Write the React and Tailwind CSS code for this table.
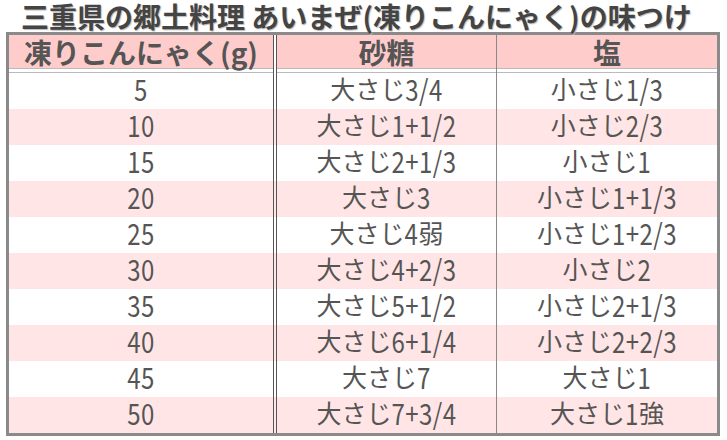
import React from 'react'

const rows = [
  ['5', '大さじ3/4', '小さじ1/3'],
  ['10', '大さじ1+1/2', '小さじ2/3'],
  ['15', '大さじ2+1/3', '小さじ1'],
  ['20', '大さじ3', '小さじ1+1/3'],
  ['25', '大さじ4弱', '小さじ1+2/3'],
  ['30', '大さじ4+2/3', '小さじ2'],
  ['35', '大さじ5+1/2', '小さじ2+1/3'],
  ['40', '大さじ6+1/4', '小さじ2+2/3'],
  ['45', '大さじ7', '大さじ1'],
  ['50', '大さじ7+3/4', '大さじ1強'],
]

// digits in the reference are narrow and tall, so stretch them vertically
const Txt = ({ text }) => {
  const parts = text.split(/([0-9+/]+)/)
  return (
    <span>
      {parts.map((p, i) =>
        /^[0-9+/]+$/.test(p) ? (
          <span key={i} className="inline-block text-[24px] leading-none scale-y-[1.2] tracking-[0.5px]">{p}</span>
        ) : (
          <span key={i}>{p}</span>
        )
      )}
    </span>
  )
}

const cols = 'grid grid-cols-[268px_220px_220px]'

const App = () => {
  return (
    <div className="w-[727px] h-[440px] bg-white font-['Noto_Sans_CJK_JP',sans-serif] text-[#555]">
      <h1 className="h-[32px] pl-[21px] pt-[1px] text-[28px] leading-[30px] font-bold text-[#444] [text-shadow:1px_1px_1px_#bbb] whitespace-nowrap">
        三重県の郷土料理 あいまぜ(凍りこんにゃく)の味つけ
      </h1>

      <div className="ml-[6px] w-[714px] border-[3px] border-[#8a8a8a]">
        {/* Header */}
        <div className={cols}>
          <div className="border-r-4 border-double border-[#555]">
            <div className="h-[33px] bg-[#ffcccc] flex items-center justify-center text-[28px] leading-none font-bold">凍りこんにゃく(g)</div>
            <div className="h-[5px] border-y border-[#bbb] bg-white" />
          </div>
          <div className="border-r border-[#888]">
            <div className="h-[33px] bg-[#ffcccc] flex items-center justify-center text-[28px] leading-none font-bold">砂糖</div>
            <div className="h-[5px] border-y border-[#bbb] bg-white" />
          </div>
          <div>
            <div className="h-[33px] bg-[#ffcccc] flex items-center justify-center text-[28px] leading-none font-bold">塩</div>
            <div className="h-[5px] border-y border-[#bbb] bg-white" />
          </div>
        </div>

        {/* Body */}
        {rows.map((r, i) => (
          <div key={r[0]} className={`${cols} h-[36px] text-[25px] leading-none ${i % 2 === 1 ? 'bg-[#ffe5e5]' : 'bg-white'}`}>
            <div className="border-r-4 border-double border-[#555] flex items-center justify-center pb-[5px]"><Txt text={r[0]} /></div>
            <div className="border-r border-[#888] flex items-center justify-center pb-[5px]"><Txt text={r[1]} /></div>
            <div className="flex items-center justify-center pb-[5px]"><Txt text={r[2]} /></div>
          </div>
        ))}
      </div>
    </div>
  )
}

export default App
